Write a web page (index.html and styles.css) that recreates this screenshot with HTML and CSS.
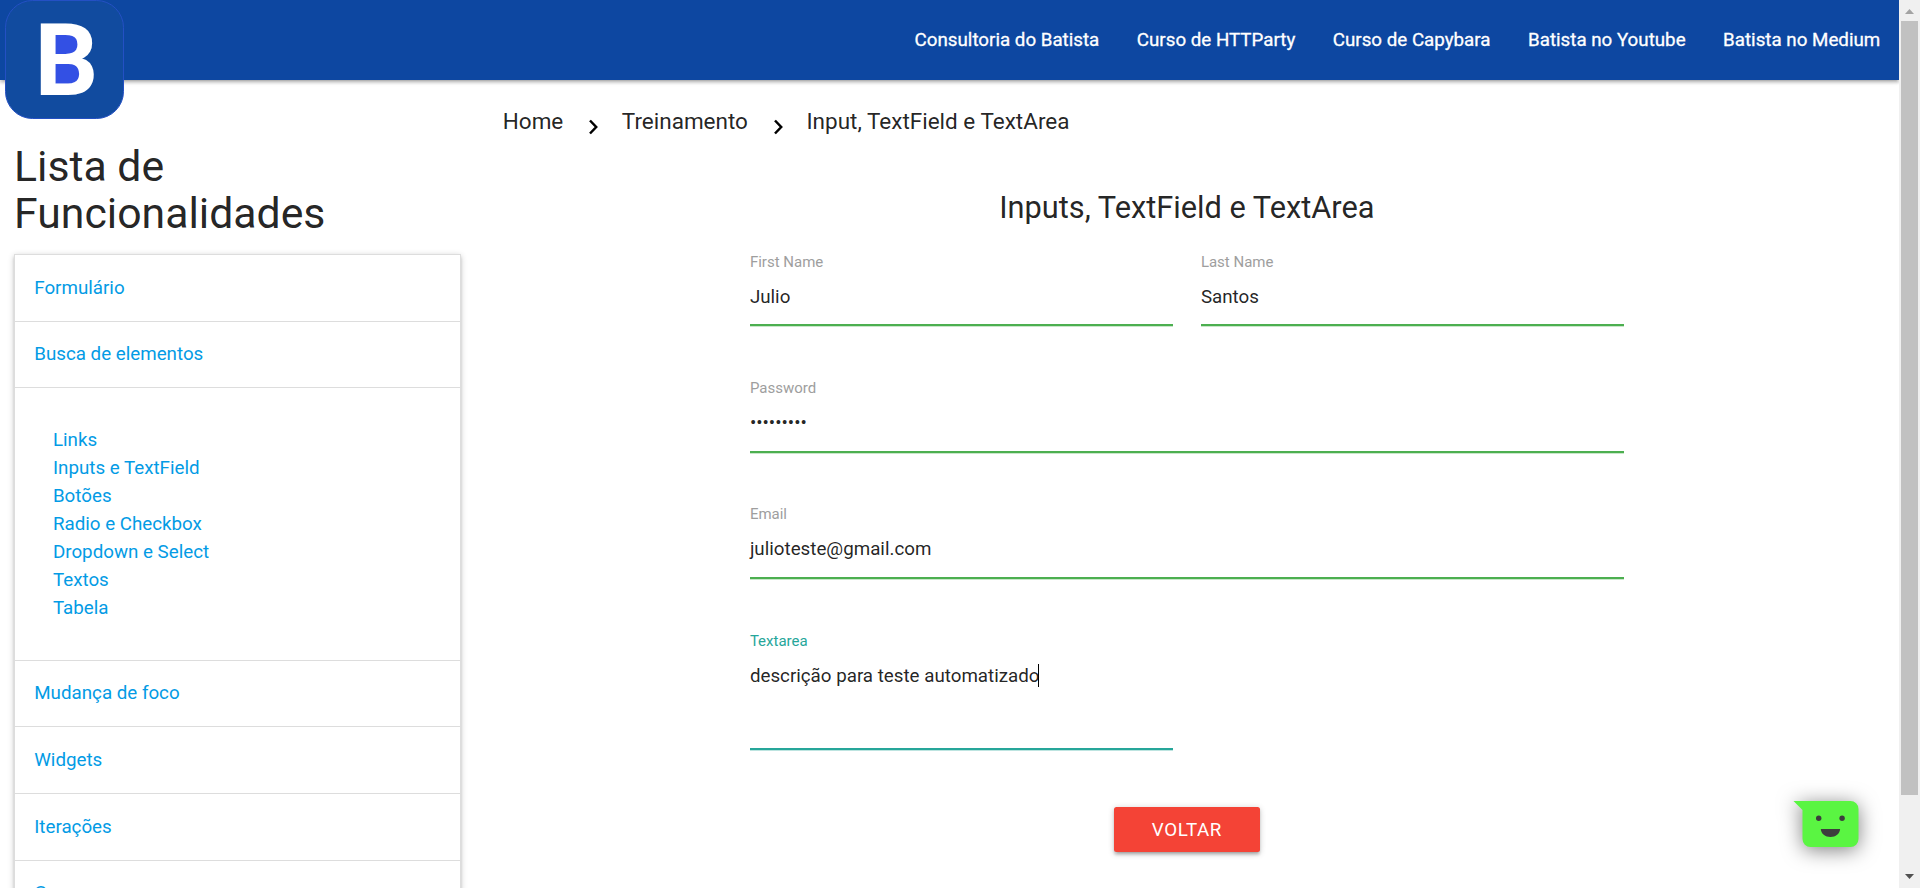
FILE: index.html
```html
<!DOCTYPE html>
<html lang="pt-BR">
<head>
<meta charset="utf-8">
<title>Inputs, TextField e TextArea</title>
<link rel="stylesheet" href="styles.css">
</head>
<body>
<div class="window">
  <div class="page">
    <nav class="navbar">
      <a class="brand" href="#">
        <svg width="120" height="120" viewBox="0 0 120 120">
          <rect x="0.5" y="0.5" width="118" height="118" rx="27" fill="#114b9f" stroke="#2450c4" stroke-width="1"/>
          <rect x="42" y="34" width="32" height="50" fill="#3350e4"/>
          <text class="brand-letter" transform="translate(29.6 94.5)">B</text>
        </svg>
      </a>
      <ul class="nav-links">
        <li><a href="#">Consultoria do Batista</a></li>
        <li><a href="#">Curso de HTTParty</a></li>
        <li><a href="#">Curso de Capybara</a></li>
        <li><a href="#">Batista no Youtube</a></li>
        <li><a href="#">Batista no Medium</a></li>
      </ul>
    </nav>
    <div class="layout">
      <aside class="sidebar">
        <h4 class="sidebar-title">Lista de Funcionalidades</h4>
        <ul class="collapsible">
          <li><a class="item" href="#">Formulário</a></li>
          <li><a class="item open" href="#">Busca de elementos</a>
            <div class="submenu">
              <a href="#">Links</a>
              <a href="#">Inputs e TextField</a>
              <a href="#">Botões</a>
              <a href="#">Radio e Checkbox</a>
              <a href="#">Dropdown e Select</a>
              <a href="#">Textos</a>
              <a href="#">Tabela</a>
            </div>
          </li>
          <li><a class="item" href="#">Mudança de foco</a></li>
          <li><a class="item" href="#">Widgets</a></li>
          <li><a class="item" href="#">Iterações</a></li>
          <li><a class="item" href="#">Gems</a></li>
        </ul>
      </aside>
      <main class="content">
        <div class="breadcrumb">
          <a href="#">Home</a>
          <svg class="chevron" width="12" height="16" viewBox="0 0 12 16"><path d="M2 1.5 8.2 8 2 14.5" fill="none" stroke="#000" stroke-width="2.5"/></svg>
          <a href="#">Treinamento</a>
          <svg class="chevron" width="12" height="16" viewBox="0 0 12 16"><path d="M2 1.5 8.2 8 2 14.5" fill="none" stroke="#000" stroke-width="2.5"/></svg>
          <a href="#">Input, TextField e TextArea</a>
        </div>
        <h5 class="title">Inputs, TextField e TextArea</h5>
        <div class="form">
          <div class="field"><span class="label">First Name</span><span class="value">Julio</span></div>
          <div class="field"><span class="label">Last Name</span><span class="value">Santos</span></div>
          <div class="field wide"><span class="label">Password</span><span class="value">•••••••••</span></div>
          <div class="field wide"><span class="label">Email</span><span class="value">julioteste@gmail.com</span></div>
          <div class="field area"><span class="label">Textarea</span><span class="value">descrição para teste automatizado<i class="caret"></i></span></div>
        </div>
        <a class="btn" href="#">VOLTAR</a>
      </main>
    </div>
    <svg class="chat" width="130" height="118" viewBox="19.5 0 130 118">
      <g class="chat-bubble"><path d="M44 31H101a8 8 0 0 1 8 8v30a8 8 0 0 1-8 8H61a8 8 0 0 1-8-8V40z" fill="#5af542"/></g>
      <circle cx="69.2" cy="48.3" r="2.7" fill="#3d3d3d"/>
      <circle cx="92.6" cy="48.3" r="2.7" fill="#3d3d3d"/>
      <path d="M71.3 59h19.3c-.3 4.8-4.4 8-9.6 8s-9.4-3.2-9.7-8z" fill="#3d3d3d"/>
    </svg>
  </div>
  <div class="scrollbar">
    <svg width="9" height="5" viewBox="0 0 9 5"><path d="M0 5 4.5 0 9 5z" fill="#a3a3a3"/></svg>
    <div class="thumb"></div>
    <svg class="down" width="9" height="5" viewBox="0 0 9 5"><path d="M0 0h9L4.5 5z" fill="#505050"/></svg>
  </div>
</div>
</body>
</html>
```
FILE: styles.css
```css
* { box-sizing: border-box; }
html { font-size: 18.75px; }
body { margin: 0; font-family: Roboto, sans-serif; line-height: 1.5; color: rgba(0,0,0,.87); background: #fff; overflow: hidden; }
a { color: #039be5; text-decoration: none; }
ul { list-style: none; margin: 0; padding: 0; }
.window { display: flex; width: 1920px; height: 888px; overflow: hidden; }
.page { width: 1899px; height: 888px; overflow: hidden; position: relative; }
.navbar { position: relative; z-index: 1; height: 80px; background: #0d47a1; box-shadow: 0 2.5px 2.5px 0 rgba(0,0,0,.14), 0 3.75px 1.25px -2.5px rgba(0,0,0,.12), 0 1.25px 6.25px 0 rgba(0,0,0,.2); }
.brand { position: absolute; left: 5px; top: 0; height: 120px; }
.brand svg { display: block; }
.brand-letter { font: 700 100px Roboto, sans-serif; fill: #fff; }
.nav-links { display: flex; justify-content: flex-end; line-height: 80px; }
.nav-links a { display: block; padding: 0 18.75px; color: #fff; -webkit-text-stroke: .3px #fff; }

.layout { display: flex; align-items: flex-start; }
.sidebar { width: 474.75px; padding: 63.15px 14.06px 0; }
.sidebar-title { margin: 0 0 17px; font-size: 42.75px; line-height: 47px; font-weight: 400; }
.collapsible { border: 1px solid #ddd; border-bottom: 0; box-shadow: 0 2.5px 2.5px 0 rgba(0,0,0,.14), 0 3.75px 1.25px -2.5px rgba(0,0,0,.12), 0 1.25px 6.25px 0 rgba(0,0,0,.2); }
.item { display: block; padding: 18.75px 19.2px; line-height: 28.125px; border-bottom: 1px solid #ddd; }
.open { padding-top: 18px; padding-bottom: 19.5px; }
.submenu { display: flex; flex-direction: column; padding: 37.5px 37.9px; line-height: 28.05px; border-bottom: 1px solid #ddd; }

.content { flex: 1; display: flex; flex-direction: column; align-items: center; }
.breadcrumb { align-self: stretch; display: flex; align-items: center; height: 80px; padding: 3px 0 0 28px; font-size: 22.5px; }
.breadcrumb a { color: rgba(0,0,0,.87); }
.chevron { margin: 10px 21.5px 0 25px; }
.title { margin: 31px 0 0; font-size: 30.75px; line-height: 34px; font-weight: 400; }
.form { display: grid; grid-template-columns: 423px 423px; column-gap: 28px; row-gap: 50.8px; margin-top: 15.5px; padding-top: 10px; }
.field { display: flex; flex-direction: column; height: 75.7px; padding-top: 2px; border-bottom: 2px solid #4caf50; box-shadow: 0 1px 0 0 #c9e7ca; }
.wide { grid-column: 1 / -1; }
.label { font-size: 15px; line-height: 18px; color: #9e9e9e; }
.value { margin-top: 12px; line-height: 28px; }
.area { height: 120px; border-color: #26a69a; box-shadow: 0 1px 0 0 #bde4e0; }
.area .label { color: #26a69a; }
.caret { display: inline-block; width: 1px; height: 23px; margin-left: -1px; background: #000; vertical-align: -5px; }
.btn { margin-top: 57px; height: 45px; padding: 0 37.5px; line-height: 46px; letter-spacing: .625px; color: #fff; background: #f44336; border-radius: 2.5px; box-shadow: 0 2.5px 2.5px 0 rgba(0,0,0,.14), 0 3.75px 1.25px -2.5px rgba(0,0,0,.12), 0 1.25px 6.25px 0 rgba(0,0,0,.2); }

.chat { position: absolute; right: 0; bottom: 0; z-index: 2; overflow: visible; }
.chat-bubble { filter: drop-shadow(0 3px 10px rgba(0,0,0,.5)); }
.scrollbar { width: 21px; height: 888px; padding: 9px 2px 9px; background: #f0f0f0; display: flex; flex-direction: column; align-items: center; }
.thumb { width: 17px; height: 774px; margin-top: 7px; background: #c1c1c1; }
.down { margin-top: auto; }
```
